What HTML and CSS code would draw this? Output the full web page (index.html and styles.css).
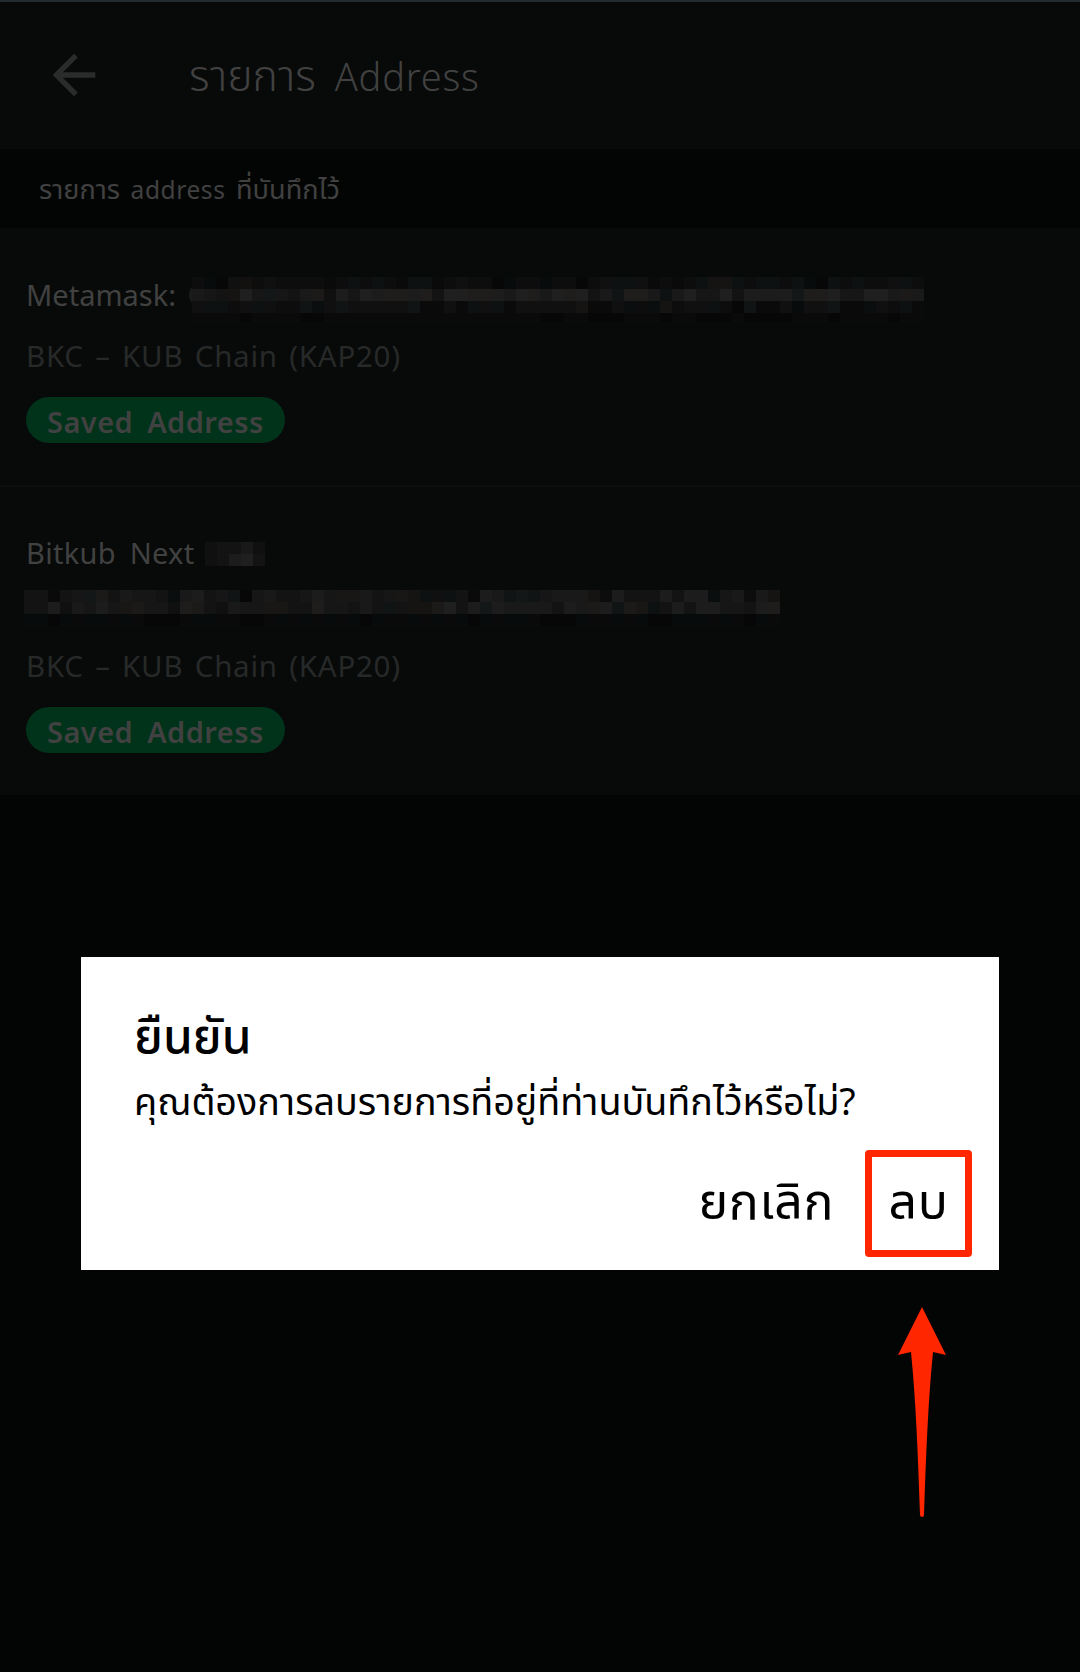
FILE: index.html
```html
<!DOCTYPE html>
<html lang="th">
<head>
    <meta charset="utf-8">
    <title>รายการ Address</title>
    <link rel="stylesheet" href="styles.css">
</head>
<body>
    <header class="topbar">
        <svg class="back" viewBox="0 0 24 24" width="64" height="64">
            <path d="M20 11H7.83l5.59-5.59L12 4l-8 8 8 8 1.41-1.41L7.83 13H20z"/>
        </svg>
        <h1><span class="th">รายการ</span> Address</h1>
    </header>

    <div class="section-title"><span class="th">รายการ</span> address <span class="th">ที่บันทึกไว้</span></div>

    <div class="item">
        <div class="name">
            <span class="label metamask">Metamask:</span>
            <svg class="mosaic" id="hidden-1"></svg>
        </div>
        <div class="chain">BKC – KUB Chain (KAP20)</div>
        <span class="badge">Saved Address</span>
    </div>

    <div class="item">
        <div class="name">
            <span class="label bitkub">Bitkub Next</span>
            <svg class="mosaic short" id="hidden-2"></svg>
        </div>
        <div class="address">
            <svg class="mosaic" id="hidden-3"></svg>
        </div>
        <div class="chain">BKC – KUB Chain (KAP20)</div>
        <span class="badge">Saved Address</span>
    </div>

    <div class="dialog">
        <h2>ยืนยัน</h2>
        <p>คุณต้องการลบรายการที่อยู่ที่ท่านบันทึกไว้หรือไม่?</p>
        <div class="actions">
            <button class="cancel">ยกเลิก</button>
            <button class="delete">ลบ</button>
        </div>
    </div>

    <svg class="pointer" width="48" height="212" viewBox="0 0 48 212">
        <path d="M24 0L48 48L35 45C30 95 28 150 26 208Q25.800 210 24 210Q22.200 210 22 208C20 150 18 95 13 45L0 48Z"/>
    </svg>

    <script>
        // 0-9 gray, a-h bluish, A-H reddish
        const rows = {
            'hidden-1': [
                '2a03C23222212c2c21cc123220a22a22023cc31212cDDc2cc2ca0c2c223c2',
                '654D85e546F37587GG7G488GG768G68G846dGG6c6855847777eGG855886F6',
                '3cc23c322db3d33333d1131c3c133333D113b2bD233c20d113a33d11b32c1',
                '1111011110011111111111111111100110001110110001000011101111011'
            ],
            'hidden-2': [
                '34463',
                '34784'
            ],
            'hidden-3': [
                '44145eF46554b6745d05644575EE645EDc3c4176ded5666D274447477b5626D',
                '44736575EF553GF43655EE44G55464d4DDF847e7666647 6F7dFEc474775547G75'.replace(' ', '').slice(0, 63),
                'aa0a1aa1a10001aa11001a1a1a1a0a11a1a1a0a1aa1000a11a1a00aaa1a10a1'
            ]
        };

        function color(c) {
            if (c >= '0' && c <= '9') {
                const v = 6 + c * 3;
                return `rgb(${v},${v + 1},${v})`;
            }
            const cold = c === c.toLowerCase();
            const n = c.toLowerCase().charCodeAt(0) - 96;
            const v = 7 + n * 3;
            return cold ? `rgb(${v - 3},${v + 1},${v + 2})` : `rgb(${v + 3},${v},${v})`;
        }

        for (const id in rows) {
            let out = '';
            // the first line starts with a round brush mark
            if (id === 'hidden-1') {
                out += '<circle cx="9" cy="18" r="12" fill="#191b1a"/>';
            }
            rows[id].forEach((row, y) => {
                [...row].forEach((c, x) => {
                    out += `<rect x="${x * 12}" y="${y * 12}" width="12" height="${y * 12 >= 36 ? 9 : 12}" fill="${color(c)}"/>`;
                });
            });
            document.getElementById(id).innerHTML = out;
        }
    </script>
</body>
</html>
```
FILE: styles.css
```css
* {
    box-sizing: border-box;
}
body {
    margin: 0;
    height: 1672px;
    position: relative;
    background: #030504;
    color: #414141;
    font-family: "Noto Sans", "Noto Sans Thai", sans-serif;
    overflow: hidden;
}
h1, h2, p {
    margin: 0;
}
.th {
    line-height: 0;
    letter-spacing: 0;
}
.topbar {
    display: flex;
    align-items: center;
    height: 149px;
    padding-left: 42px;
    border-top: 2px solid #252c2f;
    background: #080a09;
}
.back {
    margin-top: -1px;
    fill: #2a2b2b;
}
h1 {
    margin-left: 83px;
    padding-top: 1px;
    font-size: 38px;
    font-weight: 300;
    line-height: 60px;
    letter-spacing: 0.8px;
    word-spacing: 8px;
}
h1 .th {
    font-size: 43px;
}
.section-title {
    height: 79px;
    padding: 2px 0 0 39px;
    font-size: 24.5px;
    line-height: 77px;
    letter-spacing: 0.6px;
    word-spacing: 3.5px;
}
.section-title .th {
    font-size: 27.2px;
}
.item {
    padding: 41px 24px 42px 26px;
    background: #080a09;
}
.item + .item {
    border-top: 2px solid #0d0f0f;
}
.name {
    display: flex;
    height: 50px;
    font-size: 29px;
    line-height: 50px;
    letter-spacing: 0.3px;
    word-spacing: 6px;
}
.label {
    flex: none;
}
.label.metamask {
    width: 166px;
    padding-top: 1px;
    letter-spacing: 0;
}
.label.bitkub {
    width: 179px;
}
.mosaic {
    display: block;
    flex: none;
    width: 756px;
    height: 45px;
    margin-top: 8px;
    overflow: visible;
    shape-rendering: crispEdges;
}
.mosaic.short {
    width: 60px;
    height: 24px;
    margin-top: 14px;
}
.address {
    display: flex;
    height: 51px;
    padding-top: 4px;
    margin-left: -2px;
}
.chain {
    margin-top: 7px;
    color: #272929;
    font-size: 29.5px;
    line-height: 60px;
    letter-spacing: 0.75px;
    word-spacing: 3px;
}
.badge {
    display: block;
    width: 259px;
    height: 46px;
    margin-top: 11px;
    padding: 3px 0 0 21px;
    border-radius: 23px;
    background: #00331a;
    font-size: 29px;
    font-weight: 600;
    line-height: 43px;
    letter-spacing: 0.45px;
    word-spacing: 6px;
    white-space: nowrap;
}
.dialog {
    position: absolute;
    left: 81px;
    top: 957px;
    width: 918px;
    height: 313px;
    padding: 43px 27px 0 53px;
    background: #fff;
    color: #000;
}
h2 {
    font-size: 48px;
    font-weight: 500;
    line-height: 70px;
}
p {
    margin-top: 3px;
    font-size: 37.7px;
    line-height: 56px;
    white-space: nowrap;
}
.actions {
    display: flex;
    justify-content: flex-end;
    align-items: center;
    gap: 31px;
    margin-top: 21px;
}
button {
    padding: 0;
    border: none;
    background: none;
    color: #000;
    font: 400 50px/87px "Noto Sans", "Noto Sans Thai", sans-serif;
    letter-spacing: 0.6px;
}
.cancel {
    padding-bottom: 6px;
}
.delete {
    width: 107px;
    height: 107px;
    padding-bottom: 6px;
    border: 7px solid #ff2600;
    border-radius: 4px;
}
.pointer {
    position: absolute;
    left: 898px;
    top: 1307px;
    fill: #ff2600;
}
```
